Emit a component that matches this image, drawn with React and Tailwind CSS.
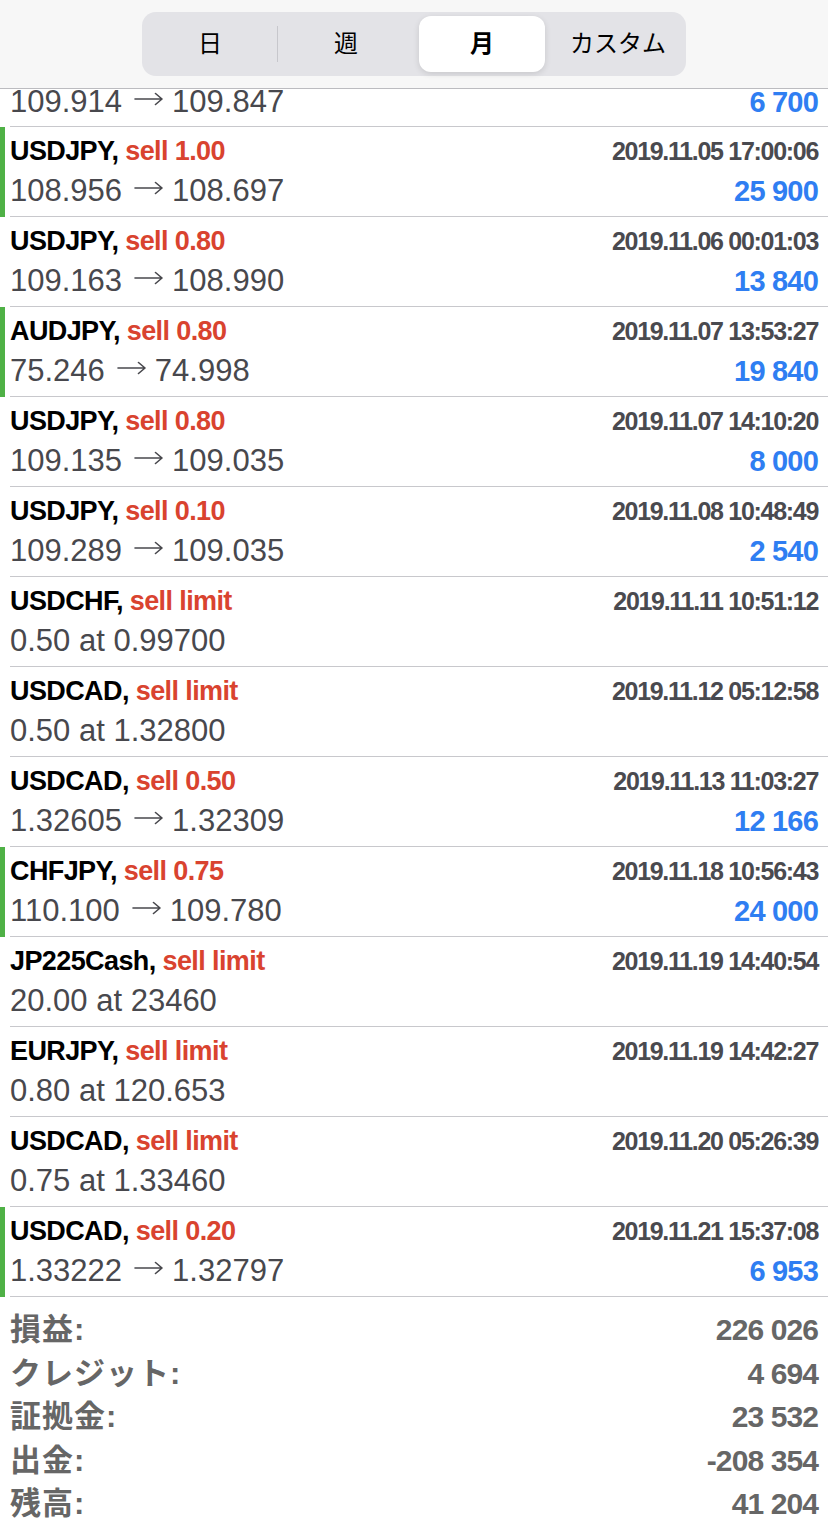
import React from 'react';

const FONT = { fontFamily: '"Liberation Sans", "Noto Sans CJK JP", sans-serif' };

const trades = [
  { sym: 'USDJPY', act: 'sell 1.00', time: '2019.11.05 17:00:06', from: '108.956', to: '108.697', profit: '25 900', mark: true },
  { sym: 'USDJPY', act: 'sell 0.80', time: '2019.11.06 00:01:03', from: '109.163', to: '108.990', profit: '13 840', mark: false },
  { sym: 'AUDJPY', act: 'sell 0.80', time: '2019.11.07 13:53:27', from: '75.246', to: '74.998', profit: '19 840', mark: true },
  { sym: 'USDJPY', act: 'sell 0.80', time: '2019.11.07 14:10:20', from: '109.135', to: '109.035', profit: '8 000', mark: false },
  { sym: 'USDJPY', act: 'sell 0.10', time: '2019.11.08 10:48:49', from: '109.289', to: '109.035', profit: '2 540', mark: false },
  { sym: 'USDCHF', act: 'sell limit', time: '2019.11.11 10:51:12', order: '0.50 at 0.99700', mark: false },
  { sym: 'USDCAD', act: 'sell limit', time: '2019.11.12 05:12:58', order: '0.50 at 1.32800', mark: false },
  { sym: 'USDCAD', act: 'sell 0.50', time: '2019.11.13 11:03:27', from: '1.32605', to: '1.32309', profit: '12 166', mark: false },
  { sym: 'CHFJPY', act: 'sell 0.75', time: '2019.11.18 10:56:43', from: '110.100', to: '109.780', profit: '24 000', mark: true },
  { sym: 'JP225Cash', act: 'sell limit', time: '2019.11.19 14:40:54', order: '20.00 at 23460', mark: false },
  { sym: 'EURJPY', act: 'sell limit', time: '2019.11.19 14:42:27', order: '0.80 at 120.653', mark: false },
  { sym: 'USDCAD', act: 'sell limit', time: '2019.11.20 05:26:39', order: '0.75 at 1.33460', mark: false },
  { sym: 'USDCAD', act: 'sell 0.20', time: '2019.11.21 15:37:08', from: '1.33222', to: '1.32797', profit: '6 953', mark: true },
];

const summary = [
  ['損益:', '226 026'],
  ['クレジット:', '4 694'],
  ['証拠金:', '23 532'],
  ['出金:', '-208 354'],
  ['残高:', '41 204'],
];

const tabs = ['日', '週', '月', 'カスタム'];

// thin long arrow between open and close price
const Arrow = () => (
  <svg width="29" height="14" viewBox="0 0 29 14" className="inline-block align-[6px] ml-[12px] mr-[9px]" fill="none" stroke="currentColor" strokeWidth="1.6" strokeLinecap="round" strokeLinejoin="round">
    <path d="M1 7H28M21.5 1.5L28 7L21.5 12.5" />
  </svg>
);

const PriceLine = ({ t }) => (
  <>
    <span className="text-[31px] text-[#48484d] whitespace-nowrap">
      {t.order ? (
        t.order
      ) : (
        <>
          {t.from}
          <Arrow />
          {t.to}
        </>
      )}
    </span>
    <span className="text-[29px] font-bold tracking-[-0.8px] text-[#2f7ef2]">{t.profit}</span>
  </>
);

const TradeRow = ({ t }) => (
  <div className="flex h-[90px]">
    <div className={`w-[5px] shrink-0 ${t.mark ? 'bg-[#4fb146]' : ''}`} />
    <div className="flex-1 ml-[5px] pr-[10px] pt-[9px] border-b border-[#c8c8cc]">
      <div className="flex items-baseline justify-between h-[30px] leading-[30px]">
        <span className="text-[27px] font-bold tracking-[-0.6px] text-black">
          {t.sym}, <span className="text-[#d9432f]">{t.act}</span>
        </span>
        <span className="text-[25px] font-bold tracking-[-1.3px] text-[#4a4a4f]">{t.time}</span>
      </div>
      <div className="flex items-baseline justify-between mt-[8px] h-[34px] leading-[34px]">
        <PriceLine t={t} />
      </div>
    </div>
  </div>
);

export default function App() {
  return (
    <div className="w-[828px] h-[1524px] overflow-hidden bg-white" style={FONT}>
      <div className="h-[89px] bg-[#f7f7f7] border-b border-[#bcbcc0] pt-[12px]">
        <div className="mx-auto w-[544px] h-[64px] rounded-[14px] bg-[#e3e3e7] grid grid-cols-4">
          {tabs.map((tab, i) => (
            <div key={tab} className="relative flex items-center justify-center">
              {i === 2 && (
                <div className="absolute left-[5px] right-[5px] top-[4px] bottom-[4px] rounded-[12px] bg-white shadow-[0_2px_6px_rgba(0,0,0,0.12)]" />
              )}
              {i === 0 && <div className="absolute right-0 top-[14px] h-[36px] w-px bg-[#c7c7cc]" />}
              <span className={`relative text-[24px] text-black ${i === 2 ? 'font-bold' : ''}`}>{tab}</span>
            </div>
          ))}
        </div>
      </div>

      {/* list is scrolled: only the lower line of the previous trade is visible */}
      <div className="flex h-[38px]">
        <div className="w-[5px] shrink-0" />
        <div className="flex-1 ml-[5px] pr-[10px] pt-[1px] border-b border-[#c8c8cc]">
          <div className="flex items-baseline justify-between h-[24px] leading-[24px]">
            <PriceLine t={{ from: '109.914', to: '109.847', profit: '6 700' }} />
          </div>
        </div>
      </div>

      {trades.map((t, i) => (
        <TradeRow key={i} t={t} />
      ))}

      <div className="pl-[10px] pr-[10px] pt-[11px]">
        {summary.map(([label, value]) => (
          <div key={label} className="flex justify-between items-baseline h-[43.5px] leading-[43.5px] font-bold text-[#666666]">
            <span className="text-[31px] tracking-[1px]">{label}</span>
            <span className="text-[30px] tracking-[-0.9px]">{value}</span>
          </div>
        ))}
      </div>
    </div>
  );
}
